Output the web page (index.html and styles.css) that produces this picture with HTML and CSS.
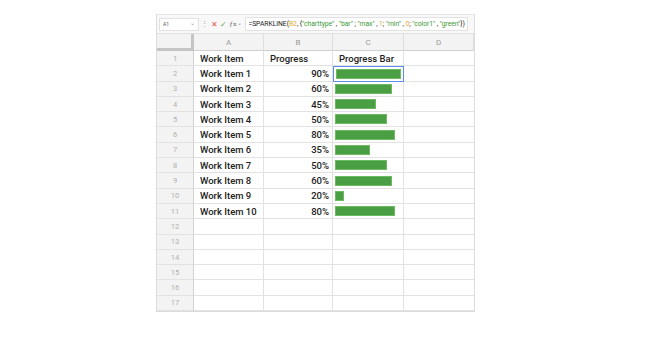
FILE: index.html
```html
<!DOCTYPE html>
<html>
  <head>
    <meta http-equiv="Content-Type" content="text/html;charset=UTF-8" />
    <title>Sparkline progress bars</title>
    <link rel="stylesheet" href="styles.css">
  </head>
  <body>
    <div class="sheet">
      <div class="toolbar">
        <div class="namebox">A1<span class="caret">&#8964;</span></div>
        <span class="dots">&#8942;</span>
        <span class="cancel">&#10005;</span>
        <span class="accept">&#10003;</span>
        <span class="fx"><i>f</i>x<span class="caret">&#8964;</span></span>
        <div class="formula">=SPARKLINE(<span class="ref">B2</span>, {<span class="str">"charttype"</span> , <span class="str">"bar"</span> ; <span class="str">"max"</span> , <span class="num">1</span>; <span class="str">"min"</span> , <span class="num">0</span>; <span class="str">"color1"</span> , <span class="str">"green"</span>})</div>
      </div>

      <div class="grid">
        <div class="corner"></div>
        <div class="colhead">A</div>
        <div class="colhead">B</div>
        <div class="colhead">C</div>
        <div class="colhead">D</div>

        <div class="rowhead">1</div>
        <div class="cell">Work Item</div>
        <div class="cell">Progress</div>
        <div class="cell">Progress Bar</div>
        <div class="cell"></div>
      </div>
    </div>

    <script>
      const items = [
        ["Work Item 1", 90, 65],
        ["Work Item 2", 60, 57],
        ["Work Item 3", 45, 41],
        ["Work Item 4", 50, 52],
        ["Work Item 5", 80, 60],
        ["Work Item 6", 35, 35],
        ["Work Item 7", 50, 52],
        ["Work Item 8", 60, 57],
        ["Work Item 9", 20, 9],
        ["Work Item 10", 80, 60],
      ];
      const grid = document.querySelector(".grid");

      function addCell(cls, text) {
        const el = document.createElement("div");
        el.className = cls;
        if (text) el.textContent = text;
        grid.appendChild(el);
        return el;
      }

      for (let r = 2; r <= 17; r++) {
        const item = items[r - 2];
        addCell("rowhead", String(r));
        if (item) {
          addCell("cell", item[0]);
          addCell("cell num", item[1] + "%");
          const c = addCell(r === 2 ? "cell chart selected" : "cell chart");
          const bar = document.createElement("div");
          bar.className = "bar";
          bar.style.width = item[2] + "px";
          c.appendChild(bar);
        } else {
          addCell("cell");
          addCell("cell");
          addCell("cell");
        }
        addCell("cell");
      }
    </script>
  </body>
</html>
```

FILE: styles.css
```css
html {
  font-family: Roboto, "Liberation Sans", Arial, sans-serif;
}
body {
  margin: 0;
  background-color: #ffffff;
  padding: 14px 0 0 156px;
}

.sheet {
  width: 317px;
  border: 1px solid #dcdcdc;
  border-top: 0;
}
.toolbar {
  display: flex;
  align-items: center;
  height: 18px;
  background-color: #f8f8f8;
  border-top: 1px solid #e6e6e6;
  border-bottom: 1px solid #e0e0e0;
  font-size: 7px;
  color: #444;
}
.namebox {
  display: flex;
  justify-content: space-between;
  align-items: center;
  width: 32px;
  height: 11px;
  margin-left: 2px;
  padding: 0 3px;
  background: #fff;
  border: 1px solid #e2e2e2;
  font-size: 5px;
  color: #555;
}
.caret {
  font-size: 6px;
  color: #999;
  line-height: 4px;
  margin-top: -2px;
}
.dots {
  margin-left: 2px;
  color: #999;
}
.cancel {
  margin-left: 3px;
  font-size: 8px;
  color: #e05a4f;
}
.accept {
  margin-left: 2px;
  font-size: 8px;
  color: #5aaa5a;
}
.fx {
  display: flex;
  align-items: center;
  gap: 1px;
  margin-left: 3px;
  color: #555;
  font-family: "Liberation Serif", serif;
}
.formula {
  flex: 1;
  height: 12px;
  margin: 0 6px 0 3px;
  padding-left: 2px;
  background: #fff;
  border: 1px solid #e2e2e2;
  line-height: 12px;
  font-size: 6.8px;
  letter-spacing: -0.05px;
  color: #222;
  white-space: nowrap;
  overflow: hidden;
}
.ref {
  color: #e6a72a;
}
.str {
  color: #3a9a36;
}
.num {
  color: #e6a72a;
}

.grid {
  display: grid;
  grid-template-columns: 37px 70px 69px 71px 70px;
  grid-auto-rows: 15.3px;
  grid-template-rows: 17px;
}
.corner {
  background: #f3f3f3;
  border-right: 3px solid #c4c4c4;
  border-bottom: 3px solid #c4c4c4;
}
.colhead {
  display: flex;
  align-items: center;
  justify-content: center;
  background: #f3f3f3;
  border-right: 1px solid #dedede;
  border-bottom: 1px solid #cfcfcf;
  font-size: 8px;
  color: #9a9a9a;
}
.rowhead {
  display: flex;
  align-items: center;
  justify-content: center;
  background: #f3f3f3;
  border-right: 1px solid #d2d2d2;
  border-bottom: 1px solid #e2e2e2;
  font-size: 7.5px;
  color: #b0b0b0;
}
.cell {
  display: flex;
  align-items: center;
  padding: 0 3px 0 6px;
  border-right: 1px solid #e2e2e2;
  border-bottom: 1px solid #e2e2e2;
  font-size: 9.5px;
  font-weight: 500;
  color: #222;
  white-space: nowrap;
}
.grid > .cell:nth-child(5n) {
  border-right: 0;
}
.cell.num {
  justify-content: flex-end;
}
.cell.chart {
  padding: 0 0 0 2px;
}
.cell.selected {
  border: 1px solid #5b8ee6;
}
.bar {
  height: 10px;
  background: #4a9e44;
  border: 1px solid #6dba61;
  box-sizing: border-box;
}
```
